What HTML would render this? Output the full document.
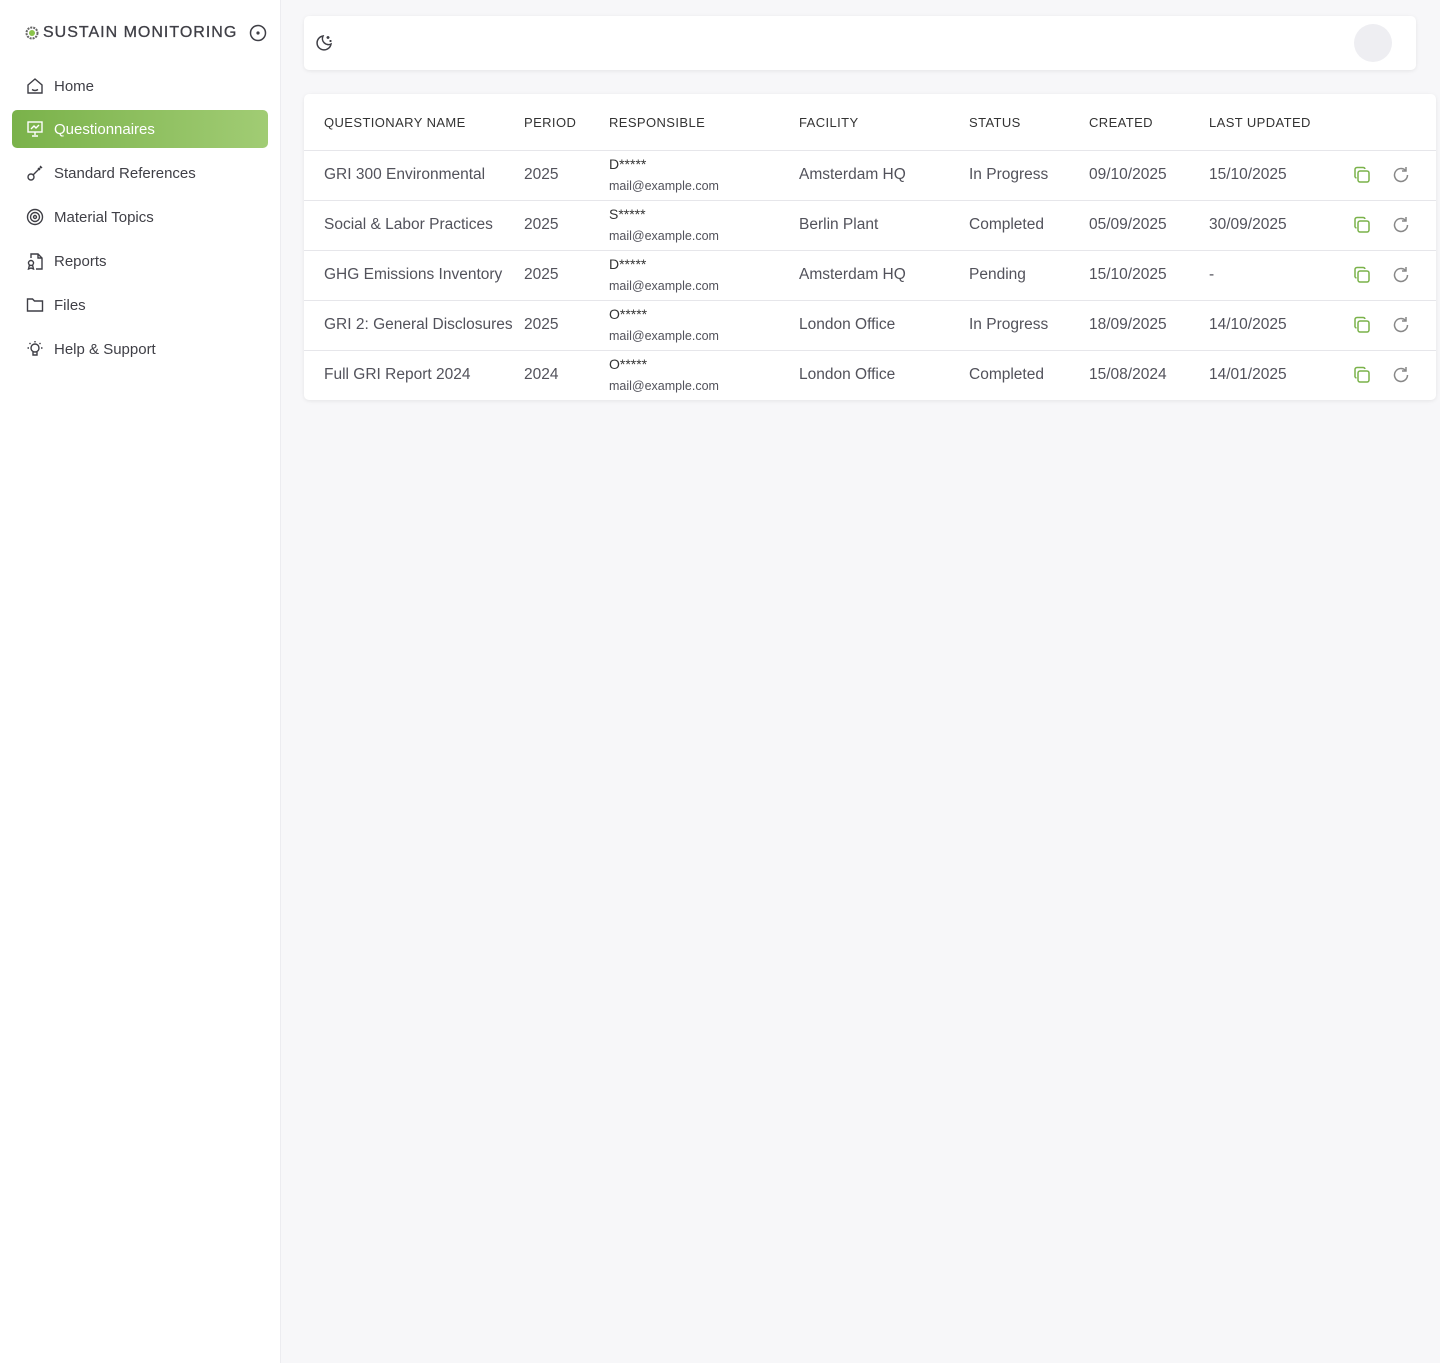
<!DOCTYPE html>
<html><head><meta charset="utf-8"><style>
*{box-sizing:border-box;margin:0;padding:0}
body{width:1440px;height:1363px;background:#f7f7f9;font-family:"Liberation Sans",sans-serif;color:#3f3f46;position:relative;overflow:hidden}
.side{position:absolute;left:0;top:0;width:281px;height:1363px;background:#fff;border-right:1px solid #ececf0}
.logo{position:absolute;left:25px;top:24px;display:flex;align-items:center;font-size:16px;font-weight:normal;letter-spacing:1px;color:#3f3f46;-webkit-text-stroke:0.3px #3f3f46}
.nav{position:absolute;left:12px;width:256px;height:38px;display:flex;align-items:center;padding-left:14px;font-size:15px;color:#3f3f46}
.nav svg{margin-right:10px}
.nav.act{background:linear-gradient(90deg,#7ab24a,#a1cc74);color:#fff;border-radius:5px}
.top{position:absolute;left:304px;top:16px;width:1112px;height:54px;background:#fff;border-radius:5px;box-shadow:0 1px 4px rgba(0,0,0,.08)}
.av{position:absolute;right:24px;top:8px;width:38px;height:38px;border-radius:50%;background:#eeeef2}
.tbl{position:absolute;left:304px;top:94px;width:1132px;height:306px;background:#fff;border-radius:5px;box-shadow:0 1px 4px rgba(0,0,0,.08)}
.th{position:absolute;top:21px;font-size:13px;letter-spacing:.4px;color:#333}
.row{position:absolute;left:0;width:1132px;height:50px;border-top:1px solid #e6e6ea}
.c{position:absolute;top:15px;font-size:15.5px;color:#52525b}
.r1{position:absolute;top:5px;font-size:14px;color:#333}
.r2{position:absolute;top:28px;font-size:12.5px;color:#52525b}
.i1{position:absolute;left:1049px;top:15px}
.i2{position:absolute;left:1087px;top:14px}
</style></head><body>
<div class="side">
<div class="logo"><svg width="14" height="14" viewBox="0 0 14 14" style="margin-right:4px"><circle cx="7" cy="7" r="5.5" fill="none" stroke="#666" stroke-width="2" stroke-dasharray="2 1"/><circle cx="7" cy="7" r="3" fill="#8bc34a"/></svg>SUSTAIN MONITORING<svg width="18" height="18" viewBox="0 0 18 18" style="margin-left:12px"><circle cx="9" cy="9" r="7.5" fill="none" stroke="#3f3f46" stroke-width="1.5"/><circle cx="9" cy="9" r="1.6" fill="#3f3f46"/></svg></div>
<div class="nav" style="top:67px"><svg width="18" height="18" viewBox="0 0 18 18" fill="none" stroke="#3f3f46" stroke-width="1.4"><path d="M2 8L9 2l7 6v8H2z"/><path d="M6 12.5q3 2 6 0"/></svg>Home</div>
<div class="nav act" style="top:110px"><svg width="18" height="18" viewBox="0 0 18 18" fill="none" stroke="#fff" stroke-width="1.4"><rect x="2" y="2" width="14" height="10"/><path d="M5 9l3-3 2 2 3-3M9 12v3M6 16h6"/></svg>Questionnaires</div>
<div class="nav" style="top:154px"><svg width="18" height="18" viewBox="0 0 18 18" fill="none" stroke="#3f3f46" stroke-width="1.4"><circle cx="5" cy="13" r="3"/><path d="M7 11l8-8M12 4l2 2M14 2l2 2"/></svg>Standard References</div>
<div class="nav" style="top:198px"><svg width="18" height="18" viewBox="0 0 18 18" fill="none" stroke="#3f3f46" stroke-width="1.4"><circle cx="9" cy="9" r="7.5"/><circle cx="9" cy="9" r="4.5"/><circle cx="9" cy="9" r="1.5"/></svg>Material Topics</div>
<div class="nav" style="top:242px"><svg width="18" height="18" viewBox="0 0 18 18" fill="none" stroke="#3f3f46" stroke-width="1.4"><path d="M5 6V2h7l4 4v11h-6M12 2v4h4"/><circle cx="5" cy="11" r="2.5"/><path d="M3.5 13l-1 4 2.5-1 2.5 1-1-4"/></svg>Reports</div>
<div class="nav" style="top:286px"><svg width="18" height="18" viewBox="0 0 18 18" fill="none" stroke="#3f3f46" stroke-width="1.4"><path d="M1.5 3h5l2 2h8v10h-15z"/></svg>Files</div>
<div class="nav" style="top:330px"><svg width="18" height="18" viewBox="0 0 18 18" fill="none" stroke="#3f3f46" stroke-width="1.4"><circle cx="9" cy="8" r="4"/><path d="M7 12v3h4v-3M9 1v1.5M1.5 8H3M15 8h1.5M3.5 3l1 1M14.5 3l-1 1"/></svg>Help &amp; Support</div>
</div>
<div class="top"><svg style="position:absolute;left:10px;top:17px" width="20" height="20" viewBox="0 0 20 20" fill="none" stroke="#3f3f46" stroke-width="1.5"><path d="M9 3a7 7 0 1 0 8 8A6 6 0 0 1 9 3z"/><path d="M14 3v3M12.5 4.5h3M16.5 7v2M15.5 8h2"/></svg><div class="av"></div></div>
<div class="tbl">
<div class="th" style="left:20px">QUESTIONARY NAME</div>
<div class="th" style="left:220px">PERIOD</div>
<div class="th" style="left:305px">RESPONSIBLE</div>
<div class="th" style="left:495px">FACILITY</div>
<div class="th" style="left:665px">STATUS</div>
<div class="th" style="left:785px">CREATED</div>
<div class="th" style="left:905px">LAST UPDATED</div>

<div class="row" style="top:56px"><div class="c" style="left:20px">GRI 300 Environmental</div><div class="c" style="left:220px">2025</div><div class="r1" style="left:305px">D*****</div><div class="r2" style="left:305px">mail@example.com</div><div class="c" style="left:495px">Amsterdam HQ</div><div class="c" style="left:665px">In Progress</div><div class="c" style="left:785px">09/10/2025</div><div class="c" style="left:905px">15/10/2025</div>
<svg class="i1" width="18" height="18" viewBox="0 0 18 18" fill="none" stroke="#7ab24a" stroke-width="1.5"><rect x="5" y="5" width="11" height="11" rx="2"/><path d="M12 3a2 2 0 0 0-2-1.5H4A2 2 0 0 0 2 3.5v6A2 2 0 0 0 3.5 12"/></svg><svg class="i2" width="20" height="20" viewBox="0 0 20 20" fill="none" stroke="#888" stroke-width="1.5"><path d="M16.5 10A6.5 6.5 0 1 1 14.5 5.3"/><path d="M15 2v4h-4"/></svg></div>

<div class="row" style="top:106px"><div class="c" style="left:20px">Social &amp; Labor Practices</div><div class="c" style="left:220px">2025</div><div class="r1" style="left:305px">S*****</div><div class="r2" style="left:305px">mail@example.com</div><div class="c" style="left:495px">Berlin Plant</div><div class="c" style="left:665px">Completed</div><div class="c" style="left:785px">05/09/2025</div><div class="c" style="left:905px">30/09/2025</div>
<svg class="i1" width="18" height="18" viewBox="0 0 18 18" fill="none" stroke="#7ab24a" stroke-width="1.5"><rect x="5" y="5" width="11" height="11" rx="2"/><path d="M12 3a2 2 0 0 0-2-1.5H4A2 2 0 0 0 2 3.5v6A2 2 0 0 0 3.5 12"/></svg><svg class="i2" width="20" height="20" viewBox="0 0 20 20" fill="none" stroke="#888" stroke-width="1.5"><path d="M16.5 10A6.5 6.5 0 1 1 14.5 5.3"/><path d="M15 2v4h-4"/></svg></div>

<div class="row" style="top:156px"><div class="c" style="left:20px">GHG Emissions Inventory</div><div class="c" style="left:220px">2025</div><div class="r1" style="left:305px">D*****</div><div class="r2" style="left:305px">mail@example.com</div><div class="c" style="left:495px">Amsterdam HQ</div><div class="c" style="left:665px">Pending</div><div class="c" style="left:785px">15/10/2025</div><div class="c" style="left:905px">-</div>
<svg class="i1" width="18" height="18" viewBox="0 0 18 18" fill="none" stroke="#7ab24a" stroke-width="1.5"><rect x="5" y="5" width="11" height="11" rx="2"/><path d="M12 3a2 2 0 0 0-2-1.5H4A2 2 0 0 0 2 3.5v6A2 2 0 0 0 3.5 12"/></svg><svg class="i2" width="20" height="20" viewBox="0 0 20 20" fill="none" stroke="#888" stroke-width="1.5"><path d="M16.5 10A6.5 6.5 0 1 1 14.5 5.3"/><path d="M15 2v4h-4"/></svg></div>

<div class="row" style="top:206px"><div class="c" style="left:20px">GRI 2: General Disclosures</div><div class="c" style="left:220px">2025</div><div class="r1" style="left:305px">O*****</div><div class="r2" style="left:305px">mail@example.com</div><div class="c" style="left:495px">London Office</div><div class="c" style="left:665px">In Progress</div><div class="c" style="left:785px">18/09/2025</div><div class="c" style="left:905px">14/10/2025</div>
<svg class="i1" width="18" height="18" viewBox="0 0 18 18" fill="none" stroke="#7ab24a" stroke-width="1.5"><rect x="5" y="5" width="11" height="11" rx="2"/><path d="M12 3a2 2 0 0 0-2-1.5H4A2 2 0 0 0 2 3.5v6A2 2 0 0 0 3.5 12"/></svg><svg class="i2" width="20" height="20" viewBox="0 0 20 20" fill="none" stroke="#888" stroke-width="1.5"><path d="M16.5 10A6.5 6.5 0 1 1 14.5 5.3"/><path d="M15 2v4h-4"/></svg></div>

<div class="row" style="top:256px"><div class="c" style="left:20px">Full GRI Report 2024</div><div class="c" style="left:220px">2024</div><div class="r1" style="left:305px">O*****</div><div class="r2" style="left:305px">mail@example.com</div><div class="c" style="left:495px">London Office</div><div class="c" style="left:665px">Completed</div><div class="c" style="left:785px">15/08/2024</div><div class="c" style="left:905px">14/01/2025</div>
<svg class="i1" width="18" height="18" viewBox="0 0 18 18" fill="none" stroke="#7ab24a" stroke-width="1.5"><rect x="5" y="5" width="11" height="11" rx="2"/><path d="M12 3a2 2 0 0 0-2-1.5H4A2 2 0 0 0 2 3.5v6A2 2 0 0 0 3.5 12"/></svg><svg class="i2" width="20" height="20" viewBox="0 0 20 20" fill="none" stroke="#888" stroke-width="1.5"><path d="M16.5 10A6.5 6.5 0 1 1 14.5 5.3"/><path d="M15 2v4h-4"/></svg></div>
</div>
</body></html>
